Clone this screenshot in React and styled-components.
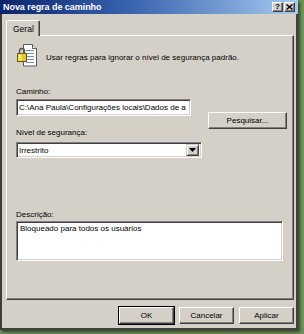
import React from "react";
import styled, { createGlobalStyle } from "styled-components";

const GlobalStyle = createGlobalStyle`
  * {
    box-sizing: border-box;
    margin: 0;
    padding: 0;
  }
  html, body {
    width: 304px;
    height: 334px;
    overflow: hidden;
  }
  body {
    background: #6f955a;
    font-family: "Liberation Sans", Arial, sans-serif;
    font-size: 8px;
    color: #000;
  }
`;

const PadlockDocIcon = () => (
  <svg width="21" height="23" viewBox="0 0 21 23">
    <path d="M6.5 0.5h9l4 4v17.5h-13z" fill="#fff" stroke="#5a5a5a" />
    <path d="M15.5 0.5v4h4" fill="#e8e8e8" stroke="#5a5a5a" />
    <g stroke="#7a8fb8" strokeWidth="1">
      <line x1="9" y1="6.5" x2="17" y2="6.5" />
      <line x1="9" y1="9.5" x2="17" y2="9.5" />
      <line x1="9" y1="12.5" x2="17" y2="12.5" />
      <line x1="9" y1="15.5" x2="17" y2="15.5" />
      <line x1="9" y1="18.5" x2="17" y2="18.5" />
    </g>
    <path d="M2.5 9.5v-2.5a2.5 2.5 0 0 1 5 0v2.5" fill="none" stroke="#555" strokeWidth="1.4" />
    <rect x="0.5" y="9.5" width="9" height="8" fill="#e8c830" stroke="#6b5a10" />
    <rect x="1.5" y="10.5" width="3" height="6" fill="#f6e680" />
  </svg>
);

const CloseGlyph = () => (
  <svg width="7" height="6" viewBox="0 0 7 6">
    <path d="M0.5 0.5l6 5M6.5 0.5l-6 5" stroke="#000" strokeWidth="1.4" />
  </svg>
);

const ArrowGlyph = () => (
  <svg width="7" height="4" viewBox="0 0 7 4">
    <path d="M0 0h7l-3.5 4z" fill="#000" />
  </svg>
);

const App = () => (
  <>
    <GlobalStyle />
    <Window>
      <TitleBar>
        <Title>Nova regra de caminho</Title>
        <CaptionButtons>
          <CaptionButton>?</CaptionButton>
          <CaptionButton>
            <CloseGlyph />
          </CaptionButton>
        </CaptionButtons>
      </TitleBar>
      <TabStrip>
        <Tab>Geral</Tab>
      </TabStrip>
      <Panel>
        <IntroRow>
          <PadlockDocIcon />
          <IntroText>Usar regras para ignorar o nível de segurança padrão.</IntroText>
        </IntroRow>
        <PathBlock>
          <LeftColumn>
            <Label>Caminho:</Label>
            <TextBox $width={175}>C:\Ana Paula\Configurações locais\Dados de a</TextBox>
            <Label $top={12}>Nível de segurança:</Label>
            <Select>
              <SelectValue>Irrestrito</SelectValue>
              <DropButton>
                <ArrowGlyph />
              </DropButton>
            </Select>
          </LeftColumn>
          <Button $width={79} $top={25}>Pesquisar...</Button>
        </PathBlock>
        <Label $top={52}>Descrição:</Label>
        <TextArea>Bloqueado para todos os usuários</TextArea>
      </Panel>
      <Footer>
        <Button $width={55} $default>OK</Button>
        <Button $width={55}>Cancelar</Button>
        <Button $width={55}>Aplicar</Button>
      </Footer>
    </Window>
  </>
);

const Window = styled.div`
  width: 298px;
  height: 330px;
  background: #d4d0c8;
  border-left: 2px solid #3c3c3c;
  border-right: 2px solid #404040;
  border-bottom: 2px solid #404040;
  box-shadow: 2px 2px 3px rgba(0, 0, 0, 0.55);
  display: flex;
  flex-direction: column;
`;

const TitleBar = styled.div`
  height: 14px;
  margin-left: -2px;
  margin-right: -2px;
  padding: 0 3px 0 3px;
  background: linear-gradient(to right, #0a246a, #3a66b0 45%, #a6caf0);
  display: flex;
  align-items: center;
  justify-content: space-between;
`;

const Title = styled.span`
  color: #fff;
  font-weight: bold;
  font-size: 9px;
  letter-spacing: -0.05px;
`;

const CaptionButtons = styled.div`
  display: flex;
  gap: 1px;
`;

const CaptionButton = styled.div`
  width: 11px;
  height: 10px;
  background: #d4d0c8;
  border-top: 1px solid #fff;
  border-left: 1px solid #fff;
  border-right: 1px solid #404040;
  border-bottom: 1px solid #404040;
  box-shadow: inset -1px -1px 0 #808080;
  display: flex;
  align-items: center;
  justify-content: center;
  font-size: 8px;
  font-weight: bold;
  line-height: 1;
`;

const TabStrip = styled.div`
  display: flex;
  padding: 6px 0 0 4px;
  position: relative;
  z-index: 1;
`;

const Tab = styled.div`
  width: 34px;
  height: 16px;
  margin-bottom: -1px;
  background: #d4d0c8;
  border-top: 1px solid #fff;
  border-left: 1px solid #fff;
  border-right: 1px solid #404040;
  border-radius: 2px 2px 0 0;
  box-shadow: inset -1px 0 0 #808080;
  padding: 3px 0 0 6px;
  font-size: 8.5px;
`;

const Panel = styled.div`
  margin: 0 2px 0 4px;
  height: 265px;
  border-top: 1px solid #fff;
  border-left: 1px solid #fff;
  border-right: 1px solid #404040;
  border-bottom: 1px solid #404040;
  box-shadow: inset -1px -1px 0 #808080;
  padding: 8px 0 0 9px;
  display: flex;
  flex-direction: column;
`;

const IntroRow = styled.div`
  display: flex;
  align-items: flex-start;
  gap: 8px;
  height: 23px;
  margin-left: 1px;
`;

const IntroText = styled.span`
  padding-top: 9px;
  font-size: 8px;
`;

const PathBlock = styled.div`
  display: flex;
  align-items: flex-start;
  gap: 6px;
  margin-top: 20px;
`;

const LeftColumn = styled.div`
  display: flex;
  flex-direction: column;
  width: 186px;
`;

const Label = styled.div`
  height: 10px;
  line-height: 10px;
  margin-top: ${({ $top }) => $top || 0}px;
  font-size: 8px;
`;

const Sunken = styled.div`
  background: #fff;
  border-top: 1px solid #808080;
  border-left: 1px solid #808080;
  border-right: 1px solid #fff;
  border-bottom: 1px solid #fff;
  box-shadow: inset 1px 1px 0 #404040, inset -1px -1px 0 #d4d0c8;
`;

const TextBox = styled(Sunken)`
  width: ${({ $width }) => $width}px;
  height: 17px;
  margin-top: 2px;
  padding: 0 0 0 2px;
  line-height: 15px;
  font-size: 8px;
  white-space: nowrap;
  overflow: hidden;
`;

const Select = styled(Sunken)`
  height: 16px;
  margin-top: 4px;
  display: flex;
  align-items: center;
  padding: 2px 2px 2px 2px;
`;

const SelectValue = styled.span`
  flex: 1;
  font-size: 8px;
`;

const DropButton = styled.div`
  width: 13px;
  height: 12px;
  background: #d4d0c8;
  border-top: 1px solid #d4d0c8;
  border-left: 1px solid #d4d0c8;
  border-right: 1px solid #404040;
  border-bottom: 1px solid #404040;
  box-shadow: inset 1px 1px 0 #fff, inset -1px -1px 0 #808080;
  display: flex;
  align-items: center;
  justify-content: center;
`;

const TextArea = styled(Sunken)`
  width: 267px;
  height: 40px;
  margin-top: 1px;
  padding: 2px 3px;
  font-size: 8px;
`;

const Button = styled.div`
  width: ${({ $width }) => $width}px;
  height: 17px;
  margin-top: ${({ $top }) => $top || 0}px;
  background: #d4d0c8;
  border-top: 1px solid #fff;
  border-left: 1px solid #fff;
  border-right: 1px solid #404040;
  border-bottom: 1px solid #404040;
  box-shadow: inset -1px -1px 0 #808080;
  outline: ${({ $default }) => ($default ? "1px solid #000" : "none")};
  outline-offset: 0;
  display: flex;
  align-items: center;
  justify-content: center;
  font-size: 8px;
`;

const Footer = styled.div`
  display: flex;
  justify-content: flex-end;
  gap: 5px;
  padding: 7px 2px 0 0;
`;

export default App;
